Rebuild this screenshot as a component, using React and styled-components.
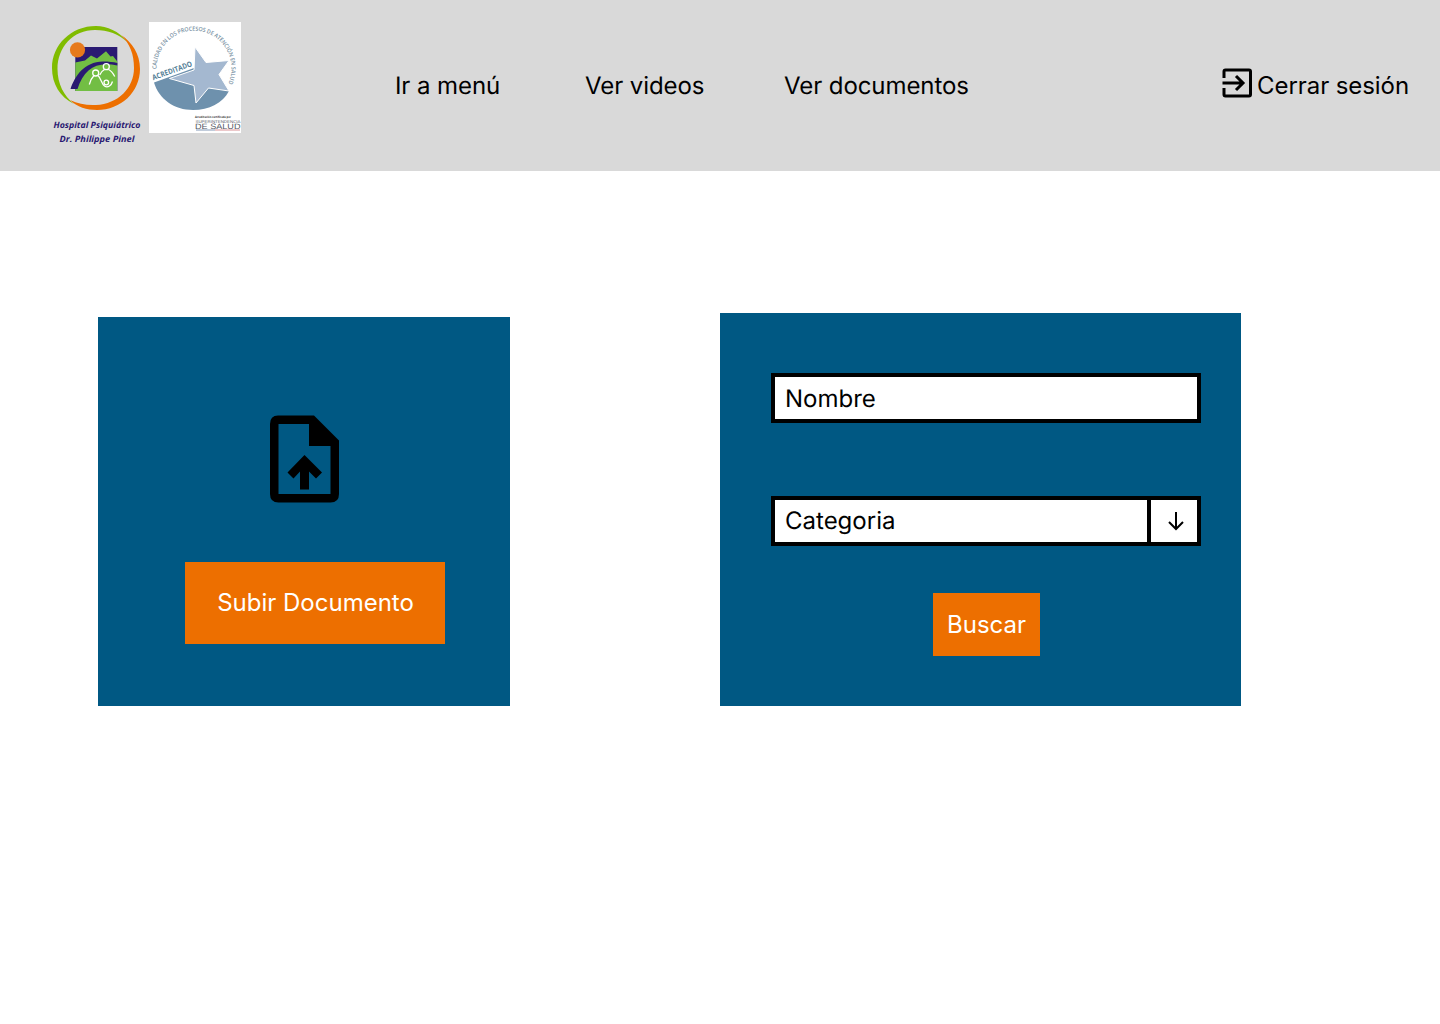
import React from "react";
import styled, { createGlobalStyle } from "styled-components";

const GlobalStyle = createGlobalStyle`
  *, *::before, *::after { box-sizing: border-box; }
  body {
    margin: 0;
    background: #fff;
    color: #000;
    font-family: Inter, "Liberation Sans", sans-serif;
    font-size: 24px;
    line-height: 29px;
    text-rendering: geometricPrecision;
  }
`;

const Header = styled.header`
  display: flex;
  align-items: center;
  height: 171px;
  padding: 0 31px 0 48px;
  background: #d9d9d9;
  letter-spacing: -0.08px;
`;

const Logos = styled.div`
  display: flex;
  align-self: flex-start;
  gap: 5px;
  padding-top: 22px;
  width: 347px;
`;

const Logo = styled.svg`
  display: block;
  flex: none;
  letter-spacing: 0;
`;

const Nav = styled.nav`
  display: flex;
`;

const NavLink = styled.a`
  color: inherit;
  text-decoration: none;
  white-space: nowrap;
  width: ${(p) => (p.$width ? `${p.$width}px` : "auto")};
`;

const Logout = styled.button`
  display: flex;
  align-items: center;
  gap: 3px;
  margin-left: auto;
  padding: 0;
  border: 0;
  background: none;
  color: inherit;
  font: inherit;
  letter-spacing: inherit;
  white-space: nowrap;
`;

const LogoutIcon = styled.svg`
  display: block;
  margin-top: -6px;
`;

const Main = styled.main`
  display: flex;
  align-items: flex-end;
  gap: 210px;
  padding: 142px 98px 0;
`;

const Panel = styled.section`
  display: flex;
  flex-direction: column;
  width: ${(p) => p.$width}px;
  height: ${(p) => p.$height}px;
  padding: ${(p) => p.$padding};
  background: #005883;
`;

const FileIcon = styled.svg`
  display: block;
  align-self: center;
`;

const Action = styled.button`
  width: ${(p) => p.$width}px;
  height: ${(p) => p.$height}px;
  margin: ${(p) => p.$margin};
  padding: ${(p) => p.$padding || 0};
  border: 0;
  background: #ed6f00;
  color: #fff;
  font: inherit;
`;

const Field = styled.div`
  display: flex;
  align-items: center;
  height: 50px;
  margin-bottom: ${(p) => p.$gap}px;
  border: 4px solid #000;
  background: #fff;
`;

const FieldLabel = styled.span`
  flex: 1;
  padding: 0 0 ${(p) => p.$lift || 0}px 10px;
`;

const FieldToggle = styled.span`
  display: flex;
  align-items: center;
  justify-content: center;
  align-self: stretch;
  width: 50px;
  padding-left: 4px;
  border-left: 4px solid #000;
`;

function HospitalLogo() {
  return (
    <Logo width="96" height="128" viewBox="48 22 96 128" aria-label="Hospital Psiquiátrico Dr. Philippe Pinel">
      <path fill="#80bc00" d="M127 42C119 31 107 26 96 26C71 26 52 45 52 68C52 84 60 97 74 104C64 96 57.500 84 57.500 69C57.500 47 73 30 95 30C108 30 119 34 127 42Z" />
      <path fill="#ed6f00" d="M121 35C132 42 140 54 140 69C140 92 121 110 97 110C87 110 77 107 70 100C78 104 87 105.500 96 105C118 104 134 88 134 68C134 54 130 44 121 35Z" />
      <rect x="75.300" y="47" width="42" height="44" fill="#2a1a72" />
      <path fill="#72be44" d="M75.300 62.500L85 60.500L91 55.500L97 58.500L106 51.300L110.500 56.500L113 56L117.300 61.500V91H75.300Z" />
      <path fill="#2a1a72" d="M70.500 89C75 76 84 62 103 61.500C109 61.500 113 62 117.300 63V65.500C96 61 84 69 77.500 89Z" />
      <circle cx="77.500" cy="49.800" r="7.600" fill="#e77a1c" />
      <g fill="none" stroke="#fff" strokeWidth="1.300">
        <circle cx="106.300" cy="66.700" r="3" />
        <circle cx="95.700" cy="73" r="3" />
        <circle cx="106.300" cy="82.500" r="2.300" />
        <path d="M99.700 75C101 72 102.500 70.500 104.500 69.500M108.500 69.500C111.500 71 113 73 114.700 76.500M89.300 84.500C90.500 80 92 77.500 94 75.500M98 75.500C101.500 79 101.500 84 104.500 86C108 88.500 111.500 85 112.500 81.500" />
      </g>
      <g fill="#2a1a72" fontFamily="Open Sans, sans-serif" fontSize="8.600" fontStyle="italic" fontWeight="700">
        <text x="53.500" y="128" textLength="87" lengthAdjust="spacingAndGlyphs">Hospital Psiquiátrico</text>
        <text x="59.500" y="142.200" textLength="75" lengthAdjust="spacingAndGlyphs">Dr. Philippe Pinel</text>
      </g>
    </Logo>
  );
}

function AccreditationLogo() {
  return (
    <Logo width="92" height="111" viewBox="149 22 92 111" aria-label="Acreditado, Superintendencia de Salud">
      <defs>
        <path id="seal-arc" d="M156.500 69A37.500 37.500 0 1 1 227 86" />
      </defs>
      <rect x="149" y="22" width="92" height="111" fill="#fff" />
      <text fill="#7890a2" fontFamily="Open Sans, sans-serif" fontSize="5.800" fontWeight="600" textLength="134" lengthAdjust="spacingAndGlyphs">
        <textPath href="#seal-arc">CALIDAD EN LOS PROCESOS DE ATENCIÓN EN SALUD</textPath>
      </text>
      <path fill="#6e91ad" d="M154 82.500L194 68L229 91C223 103 209 110 193 110C174 110 159 99 154 82.500Z" />
      <path fill="#a4b8d0" stroke="#fff" strokeWidth="1" d="M195 47L206 62.500L229 60.500L219 74.500L229 91L208.500 88L196 103L194 85.500L169.500 78.500L194 70Z" />
      <text transform="translate(153.300 80.300) rotate(-20)" fill="#557f97" fontFamily="Open Sans, sans-serif" fontSize="7.500" fontWeight="700" textLength="42" lengthAdjust="spacingAndGlyphs">ACREDITADO</text>
      <text x="195" y="117.500" fill="#333" fontFamily="Open Sans, sans-serif" fontSize="3" fontWeight="700" textLength="36" lengthAdjust="spacingAndGlyphs">Acreditación certificada por</text>
      <g fill="#545764" fontFamily="Liberation Sans, sans-serif">
        <text x="195.500" y="122.600" fontSize="4" textLength="45" lengthAdjust="spacingAndGlyphs">SUPERINTENDENCIA</text>
        <text x="195" y="128.800" fontSize="7.800" textLength="45.500" lengthAdjust="spacingAndGlyphs">DE SALUD</text>
      </g>
      <path stroke="#6682a5" strokeWidth="0.800" d="M196 130H215" />
      <path stroke="#cf777c" strokeWidth="0.800" d="M215 130H240" />
    </Logo>
  );
}

export default function App() {
  return (
    <>
      <GlobalStyle />
      <Header>
        <Logos>
          <HospitalLogo />
          <AccreditationLogo />
        </Logos>
        <Nav>
          <NavLink $width={190}>Ir a menú</NavLink>
          <NavLink $width={199}>Ver videos</NavLink>
          <NavLink>Ver documentos</NavLink>
        </Nav>
        <Logout>
          <LogoutIcon width="34" height="34" viewBox="1220 66 34 34" fill="none" stroke="#000" strokeWidth="3">
            <path d="M1224 78V71.500Q1224 70 1225.500 70H1249Q1250.500 70 1250.500 71.500V94.500Q1250.500 96 1249 96H1225.500Q1224 96 1224 94.500V88M1222.500 83H1243M1236 76L1243 83L1236 90" />
          </LogoutIcon>
          Cerrar sesión
        </Logout>
      </Header>
      <Main>
        <Panel $width={412} $height={389} $padding="98px 0 0">
          <FileIcon width="70" height="88" viewBox="269 415 70 88">
            <path fillRule="evenodd" d="M278 415.500H314L339 440.500V494Q339 502.500 330.500 502.500H278.500Q270 502.500 270 494V424Q270 415.500 278 415.500ZM278.500 424V494H330.500V446H309V424Z" />
            <path d="M304.500 455L322 472.500L316 478.500L309 471.500V489.500H300V471.500L293.500 478.500L287.500 472.500Z" />
          </FileIcon>
          <Action $width={260} $height={82} $margin="59px 0 0 87px" $padding="0 0 1px 1px">Subir Documento</Action>
        </Panel>
        <Panel $width={521} $height={393} $padding="60px 40px 0 51px">
          <Field $gap={73}>
            <FieldLabel>Nombre</FieldLabel>
          </Field>
          <Field $gap={47}>
            <FieldLabel $lift={2}>Categoria</FieldLabel>
            <FieldToggle>
              <svg width="18" height="20" viewBox="0 0 18 20" fill="none" stroke="#000" strokeWidth="2">
                <path d="M9 1V18M2 11L9 18L16 11" />
              </svg>
            </FieldToggle>
          </Field>
          <Action $width={107} $height={63} $margin="0 0 0 162px">Buscar</Action>
        </Panel>
      </Main>
    </>
  );
}
